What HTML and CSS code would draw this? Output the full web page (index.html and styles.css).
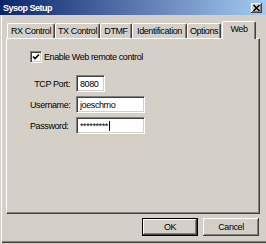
FILE: index.html
```html
<!DOCTYPE html>
<html lang="en">

<head>
    <meta charset="UTF-8">
    <title>Sysop Setup</title>
    <link rel="stylesheet" href="styles.css">
</head>

<body>
    <div class="dialog">
        <div class="titlebar">
            <span class="title">Sysop Setup</span>
            <span class="close">
                <svg width="9" height="8" viewBox="0 0 9 8">
                    <path d="M1.5 1 L7.5 7 M7.5 1 L1.5 7" stroke="#000" stroke-width="1.6" fill="none" />
                </svg>
            </span>
        </div>

        <div class="content">
            <div class="tabs">
                <div class="tab tab-rx">RX Control</div>
                <div class="tab tab-tx">TX Control</div>
                <div class="tab tab-dtmf">DTMF</div>
                <div class="tab tab-ident">Identification</div>
                <div class="tab tab-options">Options</div>
                <div class="tab tab-web active">Web</div>
            </div>

            <div class="panel">
                <div class="check-row">
                    <span class="checkbox">
                        <svg width="8" height="8" viewBox="0 0 8 8">
                            <path d="M1 3.5 L3 5.5 L7 1.5" stroke="#000" stroke-width="1.6" fill="none" />
                        </svg>
                    </span>
                    <span>Enable Web remote control</span>
                </div>

                <div class="fields">
                    <label class="field-label right">TCP Port:</label>
                    <div class="textbox short">8080</div>

                    <label class="field-label">Username:</label>
                    <div class="textbox">joeschmo</div>

                    <label class="field-label">Password:</label>
                    <div class="textbox">*********<span class="caret"></span></div>
                </div>
            </div>

            <div class="buttons">
                <button class="btn default">OK</button>
                <button class="btn">Cancel</button>
            </div>
        </div>
    </div>
</body>

</html>
```

FILE: styles.css
```css
body {
    margin: 0;
    padding: 0;
    background-color: #d4d0c8;
    font-family: "Liberation Sans", Arial, sans-serif;
    font-size: 9px;
    letter-spacing: -0.4px;
    color: #000;
}

.dialog {
    width: 266px;
    height: 243px;
    background-color: #d4d0c8;
    box-shadow: inset 1px 0 #d4d0c8, inset 2px 0 #fff, inset 0 -1px #404040, inset 0 -2px #808080;
}

/* title bar */
.titlebar {
    height: 15px;
    display: flex;
    align-items: center;
    padding: 0 4px 0 3px;
    background: linear-gradient(90deg, #0a246a, #a6caf0);
}

.title {
    color: #fff;
    font-weight: bold;
    letter-spacing: -0.5px;
}

.close {
    margin-left: auto;
    width: 11px;
    height: 10px;
    box-sizing: border-box;
    display: flex;
    align-items: center;
    justify-content: center;
    background-color: #d4d0c8;
    box-shadow: inset -1px -1px #404040, inset 1px 1px #fff, inset -2px -2px #808080;
}

.content {
    padding: 6px 6px 0 6px;
}

/* tabs */
.tabs {
    height: 17px;
    display: flex;
    align-items: flex-end;
    padding-left: 1px;
}

.tab {
    height: 15px;
    box-sizing: border-box;
    display: flex;
    align-items: center;
    justify-content: center;
    border-top: 1px solid #fff;
    border-left: 1px solid #fff;
    border-right: 1px solid #404040;
    border-radius: 2px 2px 0 0;
    box-shadow: inset -1px 0 #808080;
    white-space: nowrap;
}

.tab-rx { width: 48px; }
.tab-tx { width: 45px; }
.tab-dtmf { width: 32px; }
.tab-ident { width: 55px; }
.tab-options { width: 34px; }

.tab.active {
    width: 34px;
    height: 18px;
    margin-left: 1px;
    margin-bottom: -1px;
    position: relative;
    background-color: #d4d0c8;
    padding-bottom: 3px;
}

/* tab page */
.panel {
    width: 254px;
    height: 176px;
    box-sizing: border-box;
    border-top: 1px solid #fff;
    border-left: 1px solid #fff;
    border-right: 1px solid #404040;
    border-bottom: 1px solid #404040;
    box-shadow: inset -1px -1px #808080;
    padding: 12px 0 0 23px;
}

.check-row {
    display: flex;
    align-items: center;
    gap: 2px;
    height: 12px;
}

.checkbox {
    width: 12px;
    height: 12px;
    box-sizing: border-box;
    display: flex;
    align-items: center;
    justify-content: center;
    background-color: #fff;
    border-top: 1px solid #808080;
    border-left: 1px solid #808080;
    border-right: 1px solid #fff;
    border-bottom: 1px solid #fff;
    box-shadow: inset 1px 1px #404040, inset -1px -1px #d4d0c8;
}

.fields {
    margin-top: 12px;
    display: grid;
    grid-template-columns: 46px auto;
    row-gap: 4px;
    align-items: center;
}

.field-label.right {
    justify-self: end;
    padding-right: 6px;
}

.textbox {
    width: 69px;
    height: 17px;
    box-sizing: border-box;
    display: flex;
    align-items: center;
    padding-left: 3px;
    background-color: #fff;
    border-top: 1px solid #808080;
    border-left: 1px solid #808080;
    border-right: 1px solid #fff;
    border-bottom: 1px solid #fff;
    box-shadow: inset 1px 1px #404040, inset -1px -1px #d4d0c8;
}

.textbox.short {
    width: 29px;
}

.caret {
    width: 1px;
    height: 10px;
    margin-left: 1px;
    background-color: #000;
}

/* buttons */
.buttons {
    display: flex;
    justify-content: flex-end;
    gap: 5px;
    margin-top: 4px;
    padding-right: 1px;
}

.btn {
    width: 56px;
    height: 18px;
    padding: 0;
    font-family: inherit;
    font-size: 9px;
    letter-spacing: -0.4px;
    color: #000;
    background-color: #d4d0c8;
    border: none;
    box-shadow: inset -1px -1px #404040, inset 1px 1px #fff, inset -2px -2px #808080;
}

.btn.default {
    border: 1px solid #000;
}
```
